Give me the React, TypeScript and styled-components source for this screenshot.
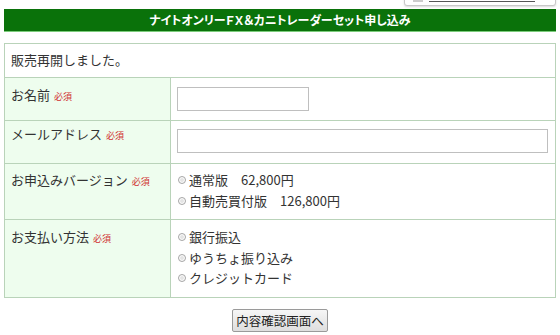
import React from 'react'
import styled, { createGlobalStyle } from 'styled-components'

const GlobalStyle = createGlobalStyle`
  html, body {
    margin: 0;
    padding: 0;
    background: #ffffff;
  }
  body {
    font-family: 'Noto Sans CJK JP', 'Noto Sans', sans-serif;
    font-size: 13px;
    color: #333333;
  }
`

const Page = styled.div`
  position: relative;
  width: 560px;
  height: 335px;
  padding: 9px 4px 0;
  box-sizing: border-box;
  overflow: hidden;
`

const Popup = styled.div`
  position: absolute;
  top: -6px;
  left: 404px;
  width: 150px;
  height: 10px;
  background: #ffffff;
  border: 1px solid #c8c8c8;
  border-radius: 3px;
  box-shadow: 0 1px 2px rgba(0, 0, 0, 0.15);

  &::before {
    content: '';
    position: absolute;
    left: 8px;
    bottom: 3px;
    width: 10px;
    height: 2px;
    background: #cccccc;
  }
  &::after {
    content: '';
    position: absolute;
    left: 24px;
    right: 20px;
    bottom: 3px;
    height: 1px;
    background: #555555;
  }
`

const Header = styled.h2`
  margin: 0;
  height: 22px;
  line-height: 21px;
  background: #0a720a;
  border-bottom: 1px solid #7ccc7c;
  color: #ffffff;
  font-size: 12px;
  font-weight: bold;
  font-feature-settings: 'palt';
  text-align: center;
`

const Table = styled.table`
  margin-top: 11px;
  width: 552px;
  border-collapse: collapse;
  border: 1px solid #b9d3b9;
`

const Row = styled.tr<{ $h: number }>`
  height: ${(p) => p.$h}px;
`

const Cell = styled.td<{ $top?: number; $label?: boolean }>`
  border: 1px solid #b9d3b9;
  padding: ${(p) => p.$top ?? 6}px 6px 0;
  vertical-align: top;
  line-height: 20px;
  background: ${(p) => (p.$label ? '#eefdee' : '#ffffff')};
  width: ${(p) => (p.$label ? '166px' : 'auto')};
  box-sizing: border-box;
`

const Required = styled.span`
  color: #d03030;
  font-size: 9px;
  line-height: 1;
  margin-left: 4px;
`

const TextInput = styled.input<{ $width: number }>`
  display: block;
  width: ${(p) => p.$width}px;
  height: 24px;
  box-sizing: border-box;
  border: 1px solid #bfbfbf;
  background: #ffffff;
  margin: 0;
`

const Option = styled.label`
  display: flex;
  align-items: center;
  height: 20.5px;
  line-height: 20px;
  white-space: pre;
`

const Radio = styled.span`
  display: inline-block;
  width: 6px;
  height: 6px;
  border: 1px solid #a8a8a8;
  border-radius: 50%;
  background: #e4e4e4;
  box-shadow: inset 0 0 0 1px #ffffff;
  margin: 0 3px 0 1px;
`

const ButtonRow = styled.div`
  display: flex;
  justify-content: center;
  margin-top: 11px;
`

const Button = styled.button`
  height: 23px;
  padding: 0 3px;
  font-family: 'Noto Sans CJK JP', sans-serif;
  font-size: 12.5px;
  color: #222222;
  background: linear-gradient(#f6f6f6, #dedede);
  border: 1px solid #9a9a9a;
  border-radius: 2px;
`

const versions = ['通常版　62,800円', '自動売買付版　126,800円']
const payments = ['銀行振込', 'ゆうちょ振り込み', 'クレジットカード']

export default function App() {
  return (
    <>
      <GlobalStyle />
      <Page>
        <Popup />
        <Header>ナイトオンリーＦＸ＆カニトレーダーセット申し込み</Header>
        <Table>
          <tbody>
            <Row $h={34}>
              <Cell colSpan={2} $top={6}>
                販売再開しました。
              </Cell>
            </Row>
            <Row $h={43}>
              <Cell $label $top={7}>
                お名前<Required>必須</Required>
              </Cell>
              <Cell $top={9}>
                <TextInput $width={132} />
              </Cell>
            </Row>
            <Row $h={43}>
              <Cell $label $top={3}>
                メールアドレス<Required>必須</Required>
              </Cell>
              <Cell $top={8}>
                <TextInput $width={371} />
              </Cell>
            </Row>
            <Row $h={56}>
              <Cell $label $top={6}>
                お申込みバージョン<Required>必須</Required>
              </Cell>
              <Cell $top={6}>
                {versions.map((v) => (
                  <Option key={v}>
                    <Radio />
                    {v}
                  </Option>
                ))}
              </Cell>
            </Row>
            <Row $h={78}>
              <Cell $label $top={7}>
                お支払い方法<Required>必須</Required>
              </Cell>
              <Cell $top={7}>
                {payments.map((v) => (
                  <Option key={v}>
                    <Radio />
                    {v}
                  </Option>
                ))}
              </Cell>
            </Row>
          </tbody>
        </Table>
        <ButtonRow>
          <Button>内容確認画面へ</Button>
        </ButtonRow>
      </Page>
    </>
  )
}
